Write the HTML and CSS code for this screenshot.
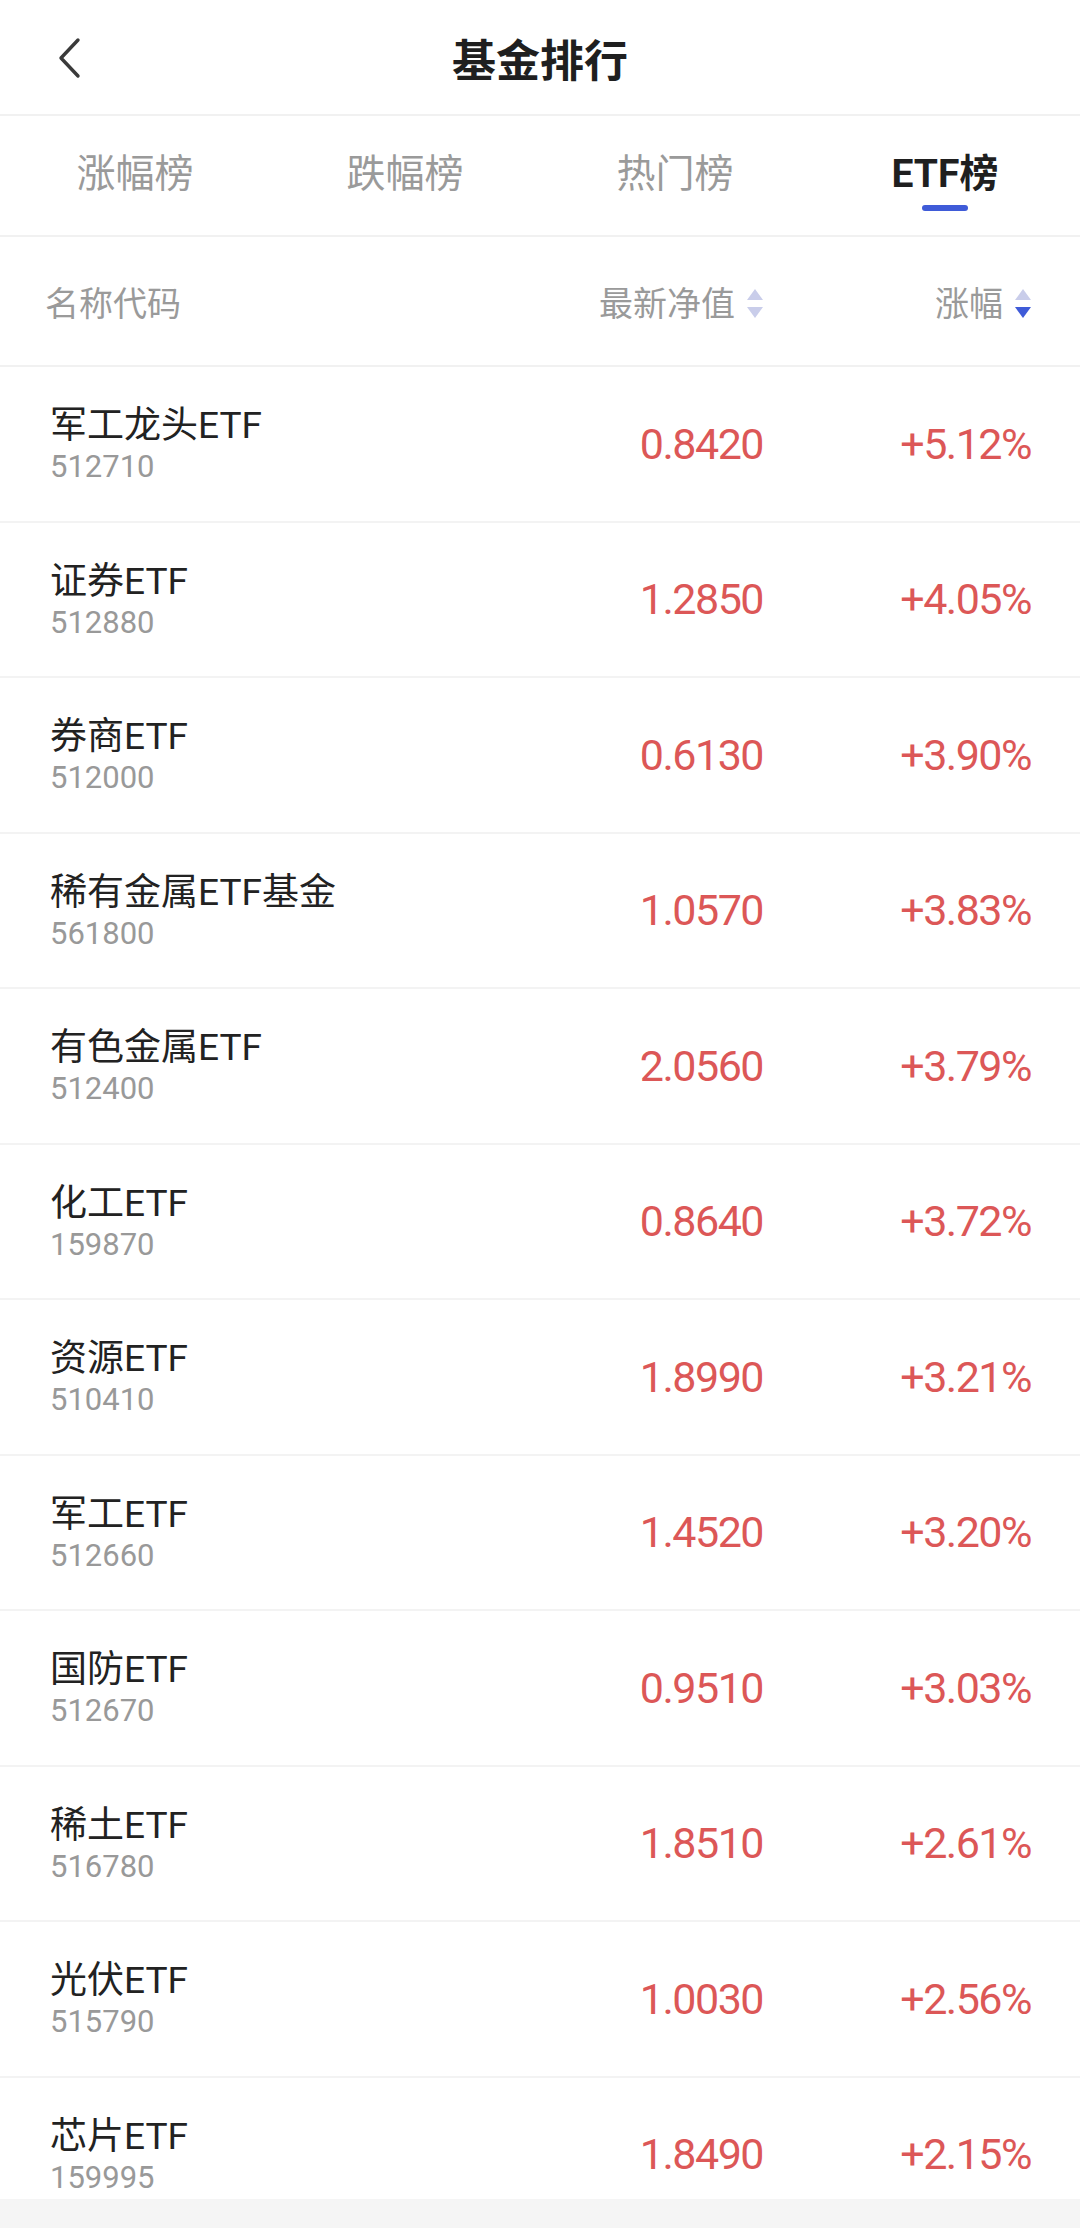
FILE: index.html
```html
<!DOCTYPE html>
<html lang="zh-CN">
<head>
    <meta charset="UTF-8">
    <meta name="viewport" content="width=device-width, initial-scale=1.0">
    <title>基金排行</title>
    <link rel="stylesheet" href="styles.css">
</head>
<body>
    <div class="page">
        <div class="header">
            <div class="back">
                <svg width="26" height="42" viewBox="0 0 26 42">
                    <path d="M22 3 L5 21 L22 39" fill="none" stroke="#3a3a3a" stroke-width="3.4" stroke-linecap="round" stroke-linejoin="round"/>
                </svg>
            </div>
            <div class="title">基金排行</div>
            <div></div>
        </div>

        <div class="tabs">
            <div class="tab"><span class="tab-label">涨幅榜</span></div>
            <div class="tab"><span class="tab-label">跌幅榜</span></div>
            <div class="tab"><span class="tab-label">热门榜</span></div>
            <div class="tab active"><span class="tab-label">ETF榜</span><span class="tab-line"></span></div>
        </div>

        <div class="col-head">
            <div class="col-name">名称代码</div>
            <div class="col-sort">最新净值
                <span class="sort-icon">
                    <span class="tri up"></span>
                    <span class="tri down"></span>
                </span>
            </div>
            <div class="col-sort">涨幅
                <span class="sort-icon">
                    <span class="tri up"></span>
                    <span class="tri down on"></span>
                </span>
            </div>
        </div>

        <div class="list">
            <div class="row">
                <div class="fund"><div class="fund-name">军工龙头ETF</div><div class="fund-code">512710</div></div>
                <div class="num">0.8420</div>
                <div class="num">+5.12%</div>
            </div>
            <div class="row">
                <div class="fund"><div class="fund-name">证券ETF</div><div class="fund-code">512880</div></div>
                <div class="num">1.2850</div>
                <div class="num">+4.05%</div>
            </div>
            <div class="row">
                <div class="fund"><div class="fund-name">券商ETF</div><div class="fund-code">512000</div></div>
                <div class="num">0.6130</div>
                <div class="num">+3.90%</div>
            </div>
            <div class="row">
                <div class="fund"><div class="fund-name">稀有金属ETF基金</div><div class="fund-code">561800</div></div>
                <div class="num">1.0570</div>
                <div class="num">+3.83%</div>
            </div>
            <div class="row">
                <div class="fund"><div class="fund-name">有色金属ETF</div><div class="fund-code">512400</div></div>
                <div class="num">2.0560</div>
                <div class="num">+3.79%</div>
            </div>
            <div class="row">
                <div class="fund"><div class="fund-name">化工ETF</div><div class="fund-code">159870</div></div>
                <div class="num">0.8640</div>
                <div class="num">+3.72%</div>
            </div>
            <div class="row">
                <div class="fund"><div class="fund-name">资源ETF</div><div class="fund-code">510410</div></div>
                <div class="num">1.8990</div>
                <div class="num">+3.21%</div>
            </div>
            <div class="row">
                <div class="fund"><div class="fund-name">军工ETF</div><div class="fund-code">512660</div></div>
                <div class="num">1.4520</div>
                <div class="num">+3.20%</div>
            </div>
            <div class="row">
                <div class="fund"><div class="fund-name">国防ETF</div><div class="fund-code">512670</div></div>
                <div class="num">0.9510</div>
                <div class="num">+3.03%</div>
            </div>
            <div class="row">
                <div class="fund"><div class="fund-name">稀土ETF</div><div class="fund-code">516780</div></div>
                <div class="num">1.8510</div>
                <div class="num">+2.61%</div>
            </div>
            <div class="row">
                <div class="fund"><div class="fund-name">光伏ETF</div><div class="fund-code">515790</div></div>
                <div class="num">1.0030</div>
                <div class="num">+2.56%</div>
            </div>
            <div class="row">
                <div class="fund"><div class="fund-name">芯片ETF</div><div class="fund-code">159995</div></div>
                <div class="num">1.8490</div>
                <div class="num">+2.15%</div>
            </div>
        </div>

        <div class="footer"></div>
    </div>
</body>
</html>
```

FILE: styles.css
```css
* {
    box-sizing: border-box;
}
body {
    margin: 0;
    font-family: Roboto, "Noto Sans CJK SC", sans-serif;
    color: #222;
    background-color: #fff;
}
.page {
    height: 100vh;
    display: flex;
    flex-direction: column;
}
.header {
    height: 116px;
    flex-shrink: 0;
    display: grid;
    grid-template-columns: 1fr auto 1fr;
    align-items: center;
    border-bottom: 2px solid #f1f1f1;
}
.back {
    padding-left: 56px;
    padding-top: 2px;
    display: flex;
}
.title {
    font-size: 44px;
    font-weight: 700;
    color: #1f1f1f;
    padding-top: 2px;
}
.tabs {
    height: 121px;
    flex-shrink: 0;
    display: grid;
    grid-template-columns: repeat(4, 1fr);
    border-bottom: 2px solid #f1f1f1;
}
.tab {
    display: flex;
    flex-direction: column;
    align-items: center;
    padding-top: 38px;
}
.tab-label {
    font-size: 39px;
    line-height: 40px;
    color: #9a9a9a;
}
.tab.active .tab-label {
    color: #1f1f1f;
    font-weight: 700;
}
.tab-line {
    width: 46px;
    height: 6px;
    margin-top: 11px;
    border-radius: 3px;
    background-color: #3f5bd8;
}
.col-head,
.row {
    display: grid;
    grid-template-columns: 1fr 300px 268px;
    padding: 0 49px 0 50px;
}
.col-head {
    height: 130px;
    flex-shrink: 0;
    align-items: center;
    border-bottom: 2px solid #f1f1f1;
    font-size: 34px;
    color: #9a9a9a;
}
.col-name {
    margin-left: -5px;
}
.col-sort {
    display: flex;
    justify-content: flex-end;
    align-items: center;
}
.sort-icon {
    display: flex;
    flex-direction: column;
    gap: 7px;
    margin-left: 12px;
    margin-top: 4px;
}
.tri {
    width: 0;
    height: 0;
    border-left: 8px solid transparent;
    border-right: 8px solid transparent;
}
.tri.up {
    border-bottom: 11px solid #c9cdea;
}
.tri.down {
    border-top: 11px solid #c9cdea;
}
.tri.down.on {
    border-top-color: #3f5bd8;
}
.list {
    flex: 1;
    overflow: hidden;
}
.row {
    height: 155.5px;
    border-bottom: 2px solid #f3f3f3;
    align-items: center;
}
.fund {
    align-self: start;
    padding-top: 37px;
}
.fund-name {
    font-size: 37px;
    line-height: 44px;
    color: #222;
}
.fund-code {
    font-size: 31px;
    line-height: 38px;
    color: #999;
}
.num {
    text-align: right;
    font-size: 43px;
    color: #dc5757;
    letter-spacing: -1.5px;
}
.footer {
    height: 29px;
    flex-shrink: 0;
    background-color: #f5f5f5;
}
```
